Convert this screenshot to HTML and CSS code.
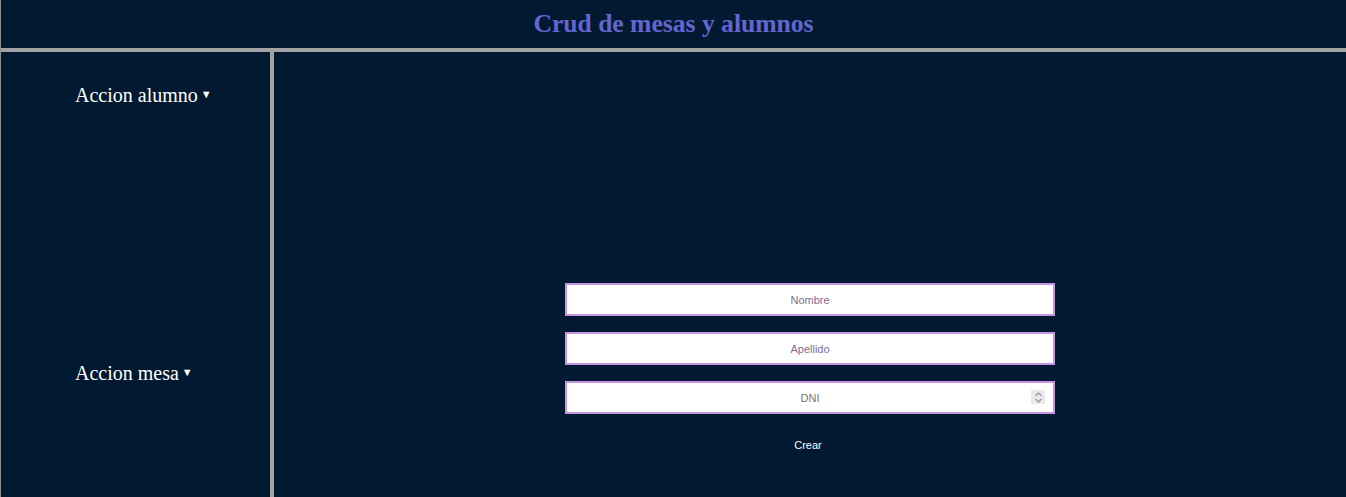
FILE: index.html
```html
<!DOCTYPE html>
<html lang="es">
<head>
<meta charset="utf-8">
<title>Crud de mesas y alumnos</title>
<link rel="stylesheet" href="styles.css">
</head>
<body>
<header class="top">
  <h1 class="title">Crud de mesas y alumnos</h1>
</header>
<div class="layout">
  <aside class="side">
    <div class="menu menu-alumno">Accion alumno <span class="caret">▼</span></div>
    <div class="menu menu-mesa">Accion mesa <span class="caret">▼</span></div>
  </aside>
  <main class="content">
    <form class="form">
      <input class="field" type="text" placeholder="Nombre">
      <input class="field" type="text" placeholder="Apellido">
      <div class="field field-num">
        <span class="ph">DNI</span>
        <span class="spin"><svg width="9" height="11" viewBox="0 0 9 11"><path d="M1.5 4 L4.5 1 L7.5 4 M1.5 7 L4.5 10 L7.5 7" fill="none" stroke="#9a9aa4" stroke-width="1.3"/></svg></span>
      </div>
      <button class="btn" type="button">Crear</button>
    </form>
  </main>
</div>
</body>
</html>
```
FILE: styles.css
```css
html, body {
  margin: 0;
  padding: 0;
  height: 100%;
}
body {
  background: #011a31;
  font-family: "Liberation Serif", "Times New Roman", serif;
  color: #ffffff;
  display: flex;
  flex-direction: column;
  overflow: hidden;
  box-sizing: border-box;
  border-left: 1px solid #8f8f8f;
}
.top {
  height: 48px;
  border-bottom: 4px solid #a2a2a2;
  display: flex;
  align-items: center;
  justify-content: center;
  flex: none;
}
.title {
  margin: 0;
  font-size: 25.6px;
  font-weight: bold;
  color: #6565d0;
}
.layout {
  flex: 1;
  display: flex;
}
.side {
  width: 273px;
  flex: none;
  border-right: 4px solid #a2a2a2;
  padding-left: 74px;
  box-sizing: border-box;
}
.menu {
  font-size: 20px;
  line-height: 23px;
}
.menu-alumno {
  margin-top: 31px;
}
.menu-mesa {
  margin-top: 254px;
}
.caret {
  font-size: 11px;
  vertical-align: 4px;
  margin-left: -2px;
}
.content {
  flex: 1;
  display: flex;
  justify-content: center;
}
.form {
  margin-top: 231px;
  width: 490px;
  display: flex;
  flex-direction: column;
  align-items: center;
  gap: 16px;
}
.field {
  width: 490px;
  height: 33px;
  box-sizing: border-box;
  border: 2px solid #c896e0;
  background: #ffffff;
  font-family: "Liberation Sans", Tahoma, sans-serif;
  font-size: 11px;
  text-align: center;
  padding: 0;
  outline: none;
}
.field::placeholder {
  color: #7a6d98;
}
.field-num {
  display: flex;
  align-items: center;
  justify-content: center;
  position: relative;
}
.ph {
  color: #757575;
}
.spin {
  position: absolute;
  right: 8px;
  top: 7px;
  width: 14px;
  height: 14px;
  background: #e9e9ee;
  display: flex;
  align-items: center;
  justify-content: center;
}
.btn {
  margin-top: 9px;
  background: none;
  border: none;
  color: #ffffff;
  font-family: "Liberation Sans", Tahoma, sans-serif;
  font-size: 11px;
  padding: 0;
  transform: translateX(-2px);
}
```
